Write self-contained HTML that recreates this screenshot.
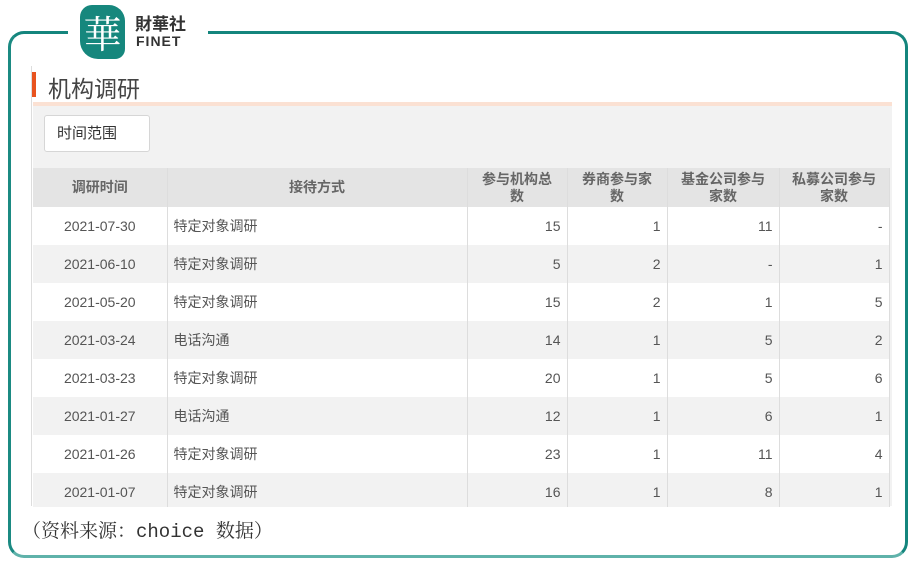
<!DOCTYPE html>
<html><head><meta charset="utf-8"><style>
*{margin:0;padding:0;box-sizing:border-box}
body{width:914px;height:564px;background:#fff;position:relative;overflow:hidden;font-family:"Liberation Sans","Noto Sans CJK SC",sans-serif;color:#555}
.frame{position:absolute;left:8px;top:31px;width:900px;height:527px;border:3px solid #14857d;border-radius:16px;border-bottom-color:#5fb2aa;border-left-color:#1b8a82}
.logobg{position:absolute;left:68px;top:20px;width:140px;height:20px;background:#fff}
.logo{position:absolute;left:80px;top:5px;width:45px;height:54px;background:#16877d;border-radius:12px 16px 10px 18px;color:#fff;font-family:"Noto Serif CJK SC",serif;font-size:38px;line-height:54px;text-align:center}
.lt{position:absolute;left:135px;top:16px;font-size:17px;font-weight:bold;color:#333;line-height:18px}
.lt2{position:absolute;left:136px;top:33px;font-size:14px;font-weight:bold;color:#333;letter-spacing:1px}
.panel{position:absolute;left:31px;top:66px;width:861px;height:440px;border-left:1px solid #ddd}
.bar{position:absolute;left:32px;top:72px;width:4px;height:25px;background:#e8531f}
.title{position:absolute;left:48px;top:70px;font-size:23px;color:#444}
.peach{position:absolute;left:33px;top:102px;width:859px;height:4px;background:#fbe1d3}
.grey{position:absolute;left:33px;top:106px;width:859px;height:400px;background:#f2f2f2}
.btn{position:absolute;left:44px;top:115px;width:106px;height:37px;background:#fff;border:1px solid #d6d6d6;border-radius:3px;font-size:15px;line-height:35px;padding-left:12px;color:#333}
.clip{position:absolute;left:33px;top:168px;width:859px;height:339px;overflow:hidden}
table{border-collapse:collapse;font-size:14px}
td,th{border-right:1px solid #ddd;height:38px;padding:0 6px}
th{background:#e4e4e4;font-weight:bold;color:#666;line-height:17px;font-size:14px;height:39px}
tr:nth-child(odd) td{background:#f2f2f2}
tr:nth-child(even) td{background:#fff}
td.n{text-align:right}
td.c{text-align:center}
.src{position:absolute;left:22px;top:516px;font-family:"Liberation Mono","Noto Serif CJK SC",monospace;font-size:19px;color:#333}
</style></head><body>
<div class="frame"></div>
<div class="logobg"></div>
<div class="logo">華</div>
<div class="lt">財華社</div>
<div class="lt2">FINET</div>
<div class="panel"></div>
<div class="bar"></div>
<div class="title">机构调研</div>
<div class="peach"></div>
<div class="grey"></div>
<div class="btn">时间范围</div>
<div class="clip">
<table>
<tr><th style="width:134px">调研时间</th><th style="width:300px">接待方式</th><th style="width:100px">参与机构总<br>数</th><th style="width:100px">券商参与家<br>数</th><th style="width:112px">基金公司参与<br>家数</th><th style="width:110px">私募公司参与<br>家数</th></tr>
<tr><td class="c">2021-07-30</td><td>特定对象调研</td><td class="n">15</td><td class="n">1</td><td class="n">11</td><td class="n">-</td></tr>
<tr><td class="c">2021-06-10</td><td>特定对象调研</td><td class="n">5</td><td class="n">2</td><td class="n">-</td><td class="n">1</td></tr>
<tr><td class="c">2021-05-20</td><td>特定对象调研</td><td class="n">15</td><td class="n">2</td><td class="n">1</td><td class="n">5</td></tr>
<tr><td class="c">2021-03-24</td><td>电话沟通</td><td class="n">14</td><td class="n">1</td><td class="n">5</td><td class="n">2</td></tr>
<tr><td class="c">2021-03-23</td><td>特定对象调研</td><td class="n">20</td><td class="n">1</td><td class="n">5</td><td class="n">6</td></tr>
<tr><td class="c">2021-01-27</td><td>电话沟通</td><td class="n">12</td><td class="n">1</td><td class="n">6</td><td class="n">1</td></tr>
<tr><td class="c">2021-01-26</td><td>特定对象调研</td><td class="n">23</td><td class="n">1</td><td class="n">11</td><td class="n">4</td></tr>
<tr><td class="c">2021-01-07</td><td>特定对象调研</td><td class="n">16</td><td class="n">1</td><td class="n">8</td><td class="n">1</td></tr>
</table>
</div>
<div class="src">（资料来源：choice 数据）</div>
</body></html>
